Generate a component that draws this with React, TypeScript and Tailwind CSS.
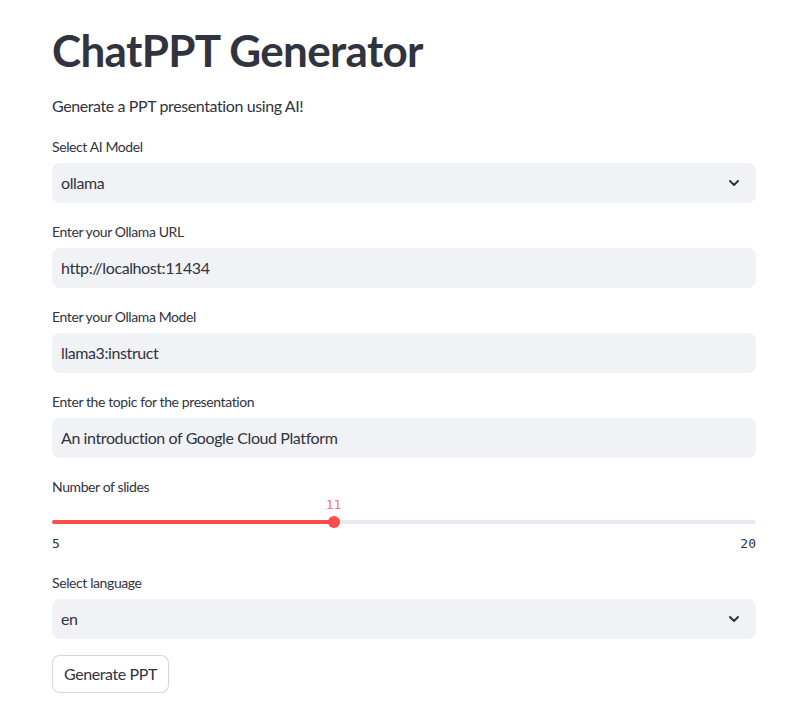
import { ChevronDown } from 'lucide-react'

const font = { fontFamily: '"Source Sans Pro", Lato, "Noto Sans", sans-serif' }

function Label({ text }: { text: string }) {
  return <div className="h-[27px] mb-[2px] flex items-center text-sm text-[#31333F]">{text}</div>
}

function SelectBox({ label, value }: { label: string; value: string }) {
  return (
    <div>
      <Label text={label} />
      <div className="h-10 rounded-lg bg-[#F0F2F6] flex items-center justify-between pl-[9px] pr-[14px] text-base text-[#31333F]">
        <span>{value}</span>
        <ChevronDown className="w-4 h-4 text-[#31333F]" strokeWidth={3} />
      </div>
    </div>
  )
}

function TextBox({ label, value }: { label: string; value: string }) {
  return (
    <div>
      <Label text={label} />
      <div className="h-10 rounded-lg bg-[#F0F2F6] flex items-center pl-[9px] text-base text-[#31333F]">
        {value}
      </div>
    </div>
  )
}

function Slider() {
  const min = 5
  const max = 20
  const value = 11
  const pct = ((value - min) / (max - min)) * 100
  return (
    <div>
      <Label text="Number of slides" />
      <div className="relative h-[51px] text-sm tracking-normal" style={{ fontFamily: '"DejaVu Sans Mono", monospace' }}>
        <div className="absolute left-0 right-0 top-[17px] h-1 rounded-full bg-[#E6EAF1]" />
        <div className="absolute left-0 top-[17px] h-1 rounded-l-full bg-[#FF4B4B]" style={{ width: `${pct}%` }} />
        <div
          className="absolute top-[13px] w-3 h-3 -ml-1.5 rounded-full bg-[#FF4B4B]"
          style={{ left: `${pct}%` }}
        />
        <div className="absolute top-[-7px] -translate-x-1/2 text-[13px] text-[#FF4B4B]/80" style={{ left: `${pct}%` }}>
          {value}
        </div>
        <div className="absolute left-0 right-0 top-[32px] flex justify-between text-[13px] text-[#31333F]">
          <span>{min}</span>
          <span>{max}</span>
        </div>
      </div>
    </div>
  )
}

export default function App() {
  return (
    <div className="min-h-screen bg-white text-[#31333F] tracking-[-0.025em]" style={font}>
      <div className="w-[704px] ml-[52px] pt-[24px] flex flex-col gap-4">
        <h1 className="text-[44px] leading-[1.2] font-bold tracking-[-0.015em] text-[#31333F]">ChatPPT Generator</h1>
        <p className="text-base mt-px">Generate a PPT presentation using AI!</p>
        <SelectBox label="Select AI Model" value="ollama" />
        <TextBox label="Enter your Ollama URL" value="http://localhost:11434" />
        <TextBox label="Enter your Ollama Model" value="llama3:instruct" />
        <TextBox label="Enter the topic for the presentation" value="An introduction of Google Cloud Platform" />
        <Slider />
        <SelectBox label="Select language" value="en" />
        <div>
          <button className="h-[38px] px-[11px] rounded-lg border border-[#31333F]/20 bg-white text-base text-[#31333F]">
            Generate PPT
          </button>
        </div>
      </div>
    </div>
  )
}
